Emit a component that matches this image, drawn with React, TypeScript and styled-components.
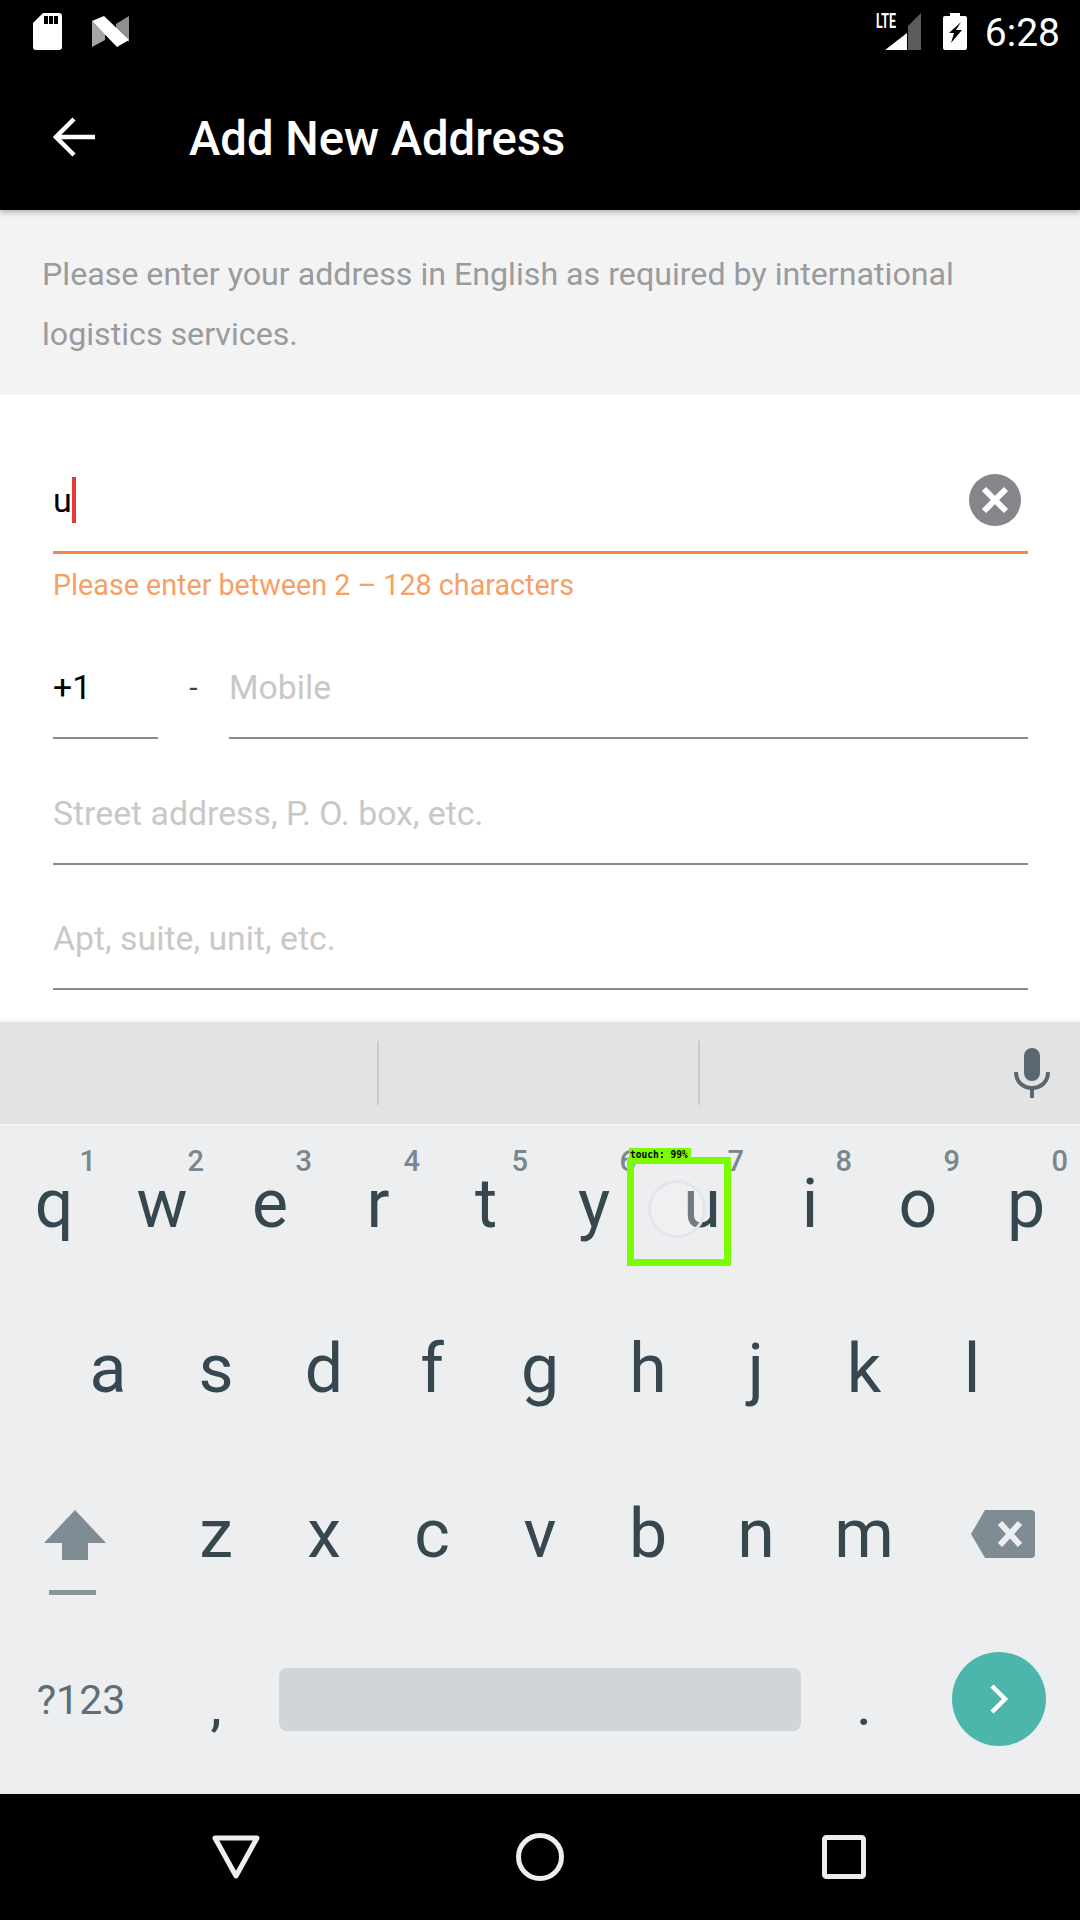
import React from "react";
import styled, { createGlobalStyle } from "styled-components";

const Global = createGlobalStyle`
  html, body { margin: 0; padding: 0; background: #fff; }
  body { font-family: Roboto, "Liberation Sans", sans-serif; }
`;

const Page = styled.div`
  position: relative;
  width: 1080px;
  height: 1920px;
  display: flex;
  flex-direction: column;
  overflow: hidden;
  background: #fff;
`;

const StatusBar = styled.div`
  height: 63px;
  background: #000;
  display: flex;
  align-items: center;
  justify-content: space-between;
  padding: 0 20px 0 33px;
  color: #fff;
`;
const StatusGroup = styled.div`
  display: flex;
  align-items: center;
  gap: ${(p: { $gap: number }) => p.$gap}px;
`;
const SignalIcon = styled.div`
  position: relative;
  width: 45px;
  height: 37px;
  margin-right: 4px;
`;
const LteBadge = styled.span`
  position: absolute;
  left: 0;
  top: 0;
  font-size: 19.5px;
  line-height: 18px;
  font-weight: 700;
  color: #fff;
  transform: scaleX(0.64);
  transform-origin: left top;
  white-space: nowrap;
`;
const Clock = styled.div`
  font-size: 39px;
  line-height: 63px;
  padding-top: 4px;
  font-weight: 400;
`;
const Toolbar = styled.div`
  position: relative;
  z-index: 2;
  height: 147px;
  background: #000;
  display: flex;
  align-items: center;
  padding: 0 0 0 53px;
  gap: 94px;
  box-shadow: 0 2px 6px rgba(0, 0, 0, 0.3);
`;
const Title = styled.div`
  color: #fff;
  font-size: 47.2px;
  font-weight: 500;
  line-height: 56px;
  padding-top: 5px;
`;
const Notice = styled.div`
  height: 185px;
  box-sizing: border-box;
  background: #f3f3f3;
  color: #999b9e;
  font-size: 32.2px;
  line-height: 59.5px;
  padding: 35px 40px 0 42px;
`;
const Form = styled.div`
  height: 625px;
  box-sizing: border-box;
  padding: 0 52px 0 53px;
  background: #fff;
  display: flex;
  flex-direction: column;
`;
const NameField = styled.div`
  height: 159px;
  box-sizing: border-box;
  border-bottom: 3px solid #f2894a;
  display: flex;
  align-items: center;
  justify-content: space-between;
  padding: 54px 7px 0 0;
`;
const Typed = styled.div`
  display: flex;
  align-items: center;
  font-size: 34px;
  color: #000;
`;
const Caret = styled.span`
  display: block;
  width: 4px;
  height: 46px;
  background: #e53935;
`;
const ErrorText = styled.div`
  color: #f6a066;
  font-size: 28.7px;
  line-height: 38px;
  margin-top: 12px;
`;
const PhoneRow = styled.div`
  display: flex;
  margin-top: 35px;
  height: 100px;
`;
const Line = styled.div<{ $width?: number }>`
  box-sizing: border-box;
  ${(p) => (p.$width ? `width: ${p.$width}px;` : "flex: 1;")}
  border-bottom: 2px solid #8a8a8a;
  font-size: 33.8px;
  line-height: 50px;
  padding-top: 24px;
`;
const Dash = styled.div`
  width: 71px;
  text-align: center;
  font-size: 30px;
  line-height: 50px;
  padding-top: 24px;
  color: #444;
`;
const Placeholder = styled.span`
  color: #c8c8c8;
`;
const AddressRow = styled.div`
  margin-top: 25.5px;
  height: 100px;
  display: flex;
`;
const Strip = styled.div`
  position: relative;
  z-index: 1;
  margin-top: 2px;
  height: 104px;
  background: #e2e3e5;
  display: flex;
  align-items: center;
  box-shadow: 0 -2px 6px rgba(0, 0, 0, 0.06);
  border-bottom: 2px solid #f4f5f6;
  box-sizing: border-box;
`;
const StripCell = styled.div`
  width: 321px;
  height: 64px;
  flex: none;
  box-sizing: border-box;
  &:first-child { width: 379px; }
  border-right: 2px solid #c9cbce;
`;
const MicSlot = styled.div`
  flex: 1;
  display: flex;
  justify-content: flex-end;
  padding-right: 30px;
`;
const Keyboard = styled.div`
  position: relative;
  height: 668px;
  background: #eceef0;
  display: flex;
  flex-direction: column;
`;
const KeyRow = styled.div<{ $inset?: number }>`
  height: 165px;
  display: flex;
  padding-left: ${(p) => p.$inset ?? 0}px;
`;
const Key = styled.div<{ $w?: number }>`
  position: relative;
  width: ${(p) => p.$w ?? 108}px;
  flex: none;
  display: flex;
  align-items: center;
  justify-content: center;
  box-sizing: border-box;
  padding-bottom: 9px;
  font-size: 68px;
  line-height: 156px;
  color: #37474f;
`;
const BackspaceKey = styled(Key)`
  padding-left: 8px;
`;
const Hint = styled.span`
  position: absolute;
  top: 18px;
  right: 12px;
  font-size: 29px;
  line-height: 34px;
  font-weight: 500;
  color: #78868d;
`;
const SymbolKey = styled(Key)`
  font-size: 41px;
  padding-bottom: 7px;
  color: #5f6f78;
`;
const PunctKey = styled(Key)`
  font-size: 50px;
  font-weight: 500;
  padding-top: 18px;
`;
const ShiftKey = styled(Key)`
  flex-direction: column;
  justify-content: flex-start;
  align-items: flex-start;
  padding: 54px 0 0 44px;
`;
const ShiftBar = styled.span`
  display: block;
  width: 47px;
  height: 5px;
  margin: 30px 0 0 5px;
  background: #89959b;
`;
const SpaceBar = styled.div`
  width: 522px;
  height: 63px;
  border-radius: 8px;
  background: #d1d5d8;
`;
const EnterButton = styled.div`
  width: 94px;
  height: 94px;
  border-radius: 50%;
  background: #4db6ac;
  display: flex;
  align-items: center;
  justify-content: center;
`;
const NavBar = styled.div`
  height: 126px;
  background: #000;
  display: flex;
  align-items: center;
  justify-content: center;
  gap: 256px;
`;
const TouchBox = styled.div`
  position: absolute;
  left: 627px;
  top: 1157px;
  width: 104px;
  height: 109px;
  box-sizing: border-box;
  border: 7px solid #7cfc00;
  z-index: 5;
`;
const TouchLabel = styled.div`
  position: absolute;
  left: -5px;
  top: -16px;
  width: 62px;
  height: 13px;
  background: #7cfc00;
  color: #000;
  font-family: "DejaVu Sans Mono", "Liberation Mono", monospace;
  font-size: 9.6px;
  font-weight: 700;
  line-height: 13px;
  white-space: nowrap;
  padding-left: 1px;
  box-sizing: border-box;
  overflow: hidden;
`;
const Ripple = styled.div`
  position: absolute;
  left: 14px;
  top: 16px;
  width: 58px;
  height: 58px;
  box-sizing: border-box;
  border-radius: 50%;
  border: 3px solid #e3e5ea;
  background: rgba(244, 245, 247, 0.3);
`;

const row1 = [["q","1"],["w","2"],["e","3"],["r","4"],["t","5"],["y","6"],["u","7"],["i","8"],["o","9"],["p","0"]];

export default function App() {
  return (
    <Page>
      <Global />
      <StatusBar>
        <StatusGroup $gap={30}>
          <svg width="29" height="37" viewBox="0 0 29 37">
            <path fill="#fff" d="M10 0h16a3 3 0 0 1 3 3v31a3 3 0 0 1-3 3H3a3 3 0 0 1-3-3V10z" />
            <path fill="#000" d="M11 3h4v8h-4zM16 3h4v8h-4zM21 3h4v8h-4z" />
          </svg>
          <svg width="37" height="31" viewBox="0 0 37 31">
            <path fill="#a5a5a5" d="M0 5l13 13v6L0 31z" />
            <path fill="#8f8f8f" d="M24 8l13-8v26L24 13z" />
            <path fill="#fff" d="M0 5l12-5 25 24-12 7z" />
          </svg>
        </StatusGroup>
        <StatusGroup $gap={18}>
          <SignalIcon>
            <svg width="45" height="37" viewBox="0 0 45 37">
              <path fill="#fff" d="M9 37L31 20v17z" />
              <path fill="#5c5c5c" d="M32 13L45 0v37H32z" />
            </svg>
            <LteBadge>LTE</LteBadge>
          </SignalIcon>
          <svg width="24" height="37" viewBox="0 0 24 37">
            <path fill="#fff" d="M7 0h10v3h5a2 2 0 0 1 2 2v30a2 2 0 0 1-2 2H2a2 2 0 0 1-2-2V5a2 2 0 0 1 2-2h5z" />
            <path fill="#000" d="M18 9L6 20h5L8 30l11-13h-6z" />
          </svg>
          <Clock>6:28</Clock>
        </StatusGroup>
      </StatusBar>
      <Toolbar>
        <svg width="42" height="40" viewBox="0 0 42 40" fill="none" stroke="#fff" strokeWidth="4.5">
          <path d="M42 20H4M21 2L3 20l18 18" />
        </svg>
        <Title>Add New Address</Title>
      </Toolbar>
      <Notice>Please enter your address in English as required by international logistics services.</Notice>
      <Form>
        <NameField>
          <Typed>u<Caret /></Typed>
          <svg width="52" height="52" viewBox="0 0 52 52">
            <circle cx="26" cy="26" r="26" fill="#85868b" />
            <path d="M15 15l22 22M37 15L15 37" stroke="#fff" strokeWidth="6" />
          </svg>
        </NameField>
        <ErrorText>Please enter between 2 – 128 characters</ErrorText>
        <PhoneRow>
          <Line $width={105}>+1</Line>
          <Dash>-</Dash>
          <Line><Placeholder>Mobile</Placeholder></Line>
        </PhoneRow>
        <AddressRow><Line><Placeholder>Street address, P. O. box, etc.</Placeholder></Line></AddressRow>
        <AddressRow><Line><Placeholder>Apt, suite, unit, etc.</Placeholder></Line></AddressRow>
      </Form>
      <Strip>
        <StripCell />
        <StripCell />
        <MicSlot>
          <svg width="36" height="50" viewBox="0 0 36 50">
            <rect x="10" y="0" width="16" height="33" rx="8" fill="#5b6770" />
            <path d="M2 24c0 10 7 16 16 16s16-6 16-16" fill="none" stroke="#5b6770" strokeWidth="4" />
            <path d="M16 38h4v12h-4z" fill="#5b6770" />
          </svg>
        </MicSlot>
      </Strip>
      <Keyboard>
        <KeyRow>
          {row1.map(([k, n]) => (
            <Key key={k}>{k}<Hint>{n}</Hint></Key>
          ))}
        </KeyRow>
        <KeyRow $inset={54}>
          {"asdfghjkl".split("").map((k) => <Key key={k}>{k}</Key>)}
        </KeyRow>
        <KeyRow>
          <ShiftKey $w={162}>
            <svg width="62" height="50" viewBox="0 0 62 50">
              <path fill="#7f8c93" d="M31 0l31 33H44v17H18V33H0z" />
            </svg>
            <ShiftBar />
          </ShiftKey>
          {"zxcvbnm".split("").map((k) => <Key key={k}>{k}</Key>)}
          <BackspaceKey $w={162}>
            <svg width="64" height="48" viewBox="0 0 64 48">
              <path fill="#7f8c93" d="M14 0h46a4 4 0 0 1 4 4v40a4 4 0 0 1-4 4H14L0 24z" />
              <path d="M29 13l20 22M49 13L29 35" stroke="#eceef0" strokeWidth="6" />
            </svg>
          </BackspaceKey>
        </KeyRow>
        <KeyRow>
          <SymbolKey $w={162}>?123</SymbolKey>
          <PunctKey>,</PunctKey>
          <Key $w={540}><SpaceBar /></Key>
          <PunctKey>.</PunctKey>
          <Key $w={162}>
            <EnterButton>
              <svg width="20" height="32" viewBox="0 0 20 32" fill="none" stroke="#fff" strokeWidth="4.5">
                <path d="M3 3l13 13L3 29" />
              </svg>
            </EnterButton>
          </Key>
        </KeyRow>
      </Keyboard>
      <NavBar>
        <svg width="48" height="44" viewBox="0 0 48 44" fill="none" stroke="#eee" strokeWidth="5" strokeLinejoin="round">
          <path d="M3 3h42L24 41z" />
        </svg>
        <svg width="48" height="48" viewBox="0 0 48 48" fill="none" stroke="#eee" strokeWidth="5">
          <circle cx="24" cy="24" r="21.5" />
        </svg>
        <svg width="48" height="44" viewBox="-2 0 48 44" fill="none" stroke="#eee" strokeWidth="5" strokeLinejoin="round">
          <rect x="2.5" y="2.5" width="39" height="39" rx="2" />
        </svg>
      </NavBar>
      <TouchBox>
        <TouchLabel>touch: 99%</TouchLabel>
        <Ripple />
      </TouchBox>
    </Page>
  );
}
